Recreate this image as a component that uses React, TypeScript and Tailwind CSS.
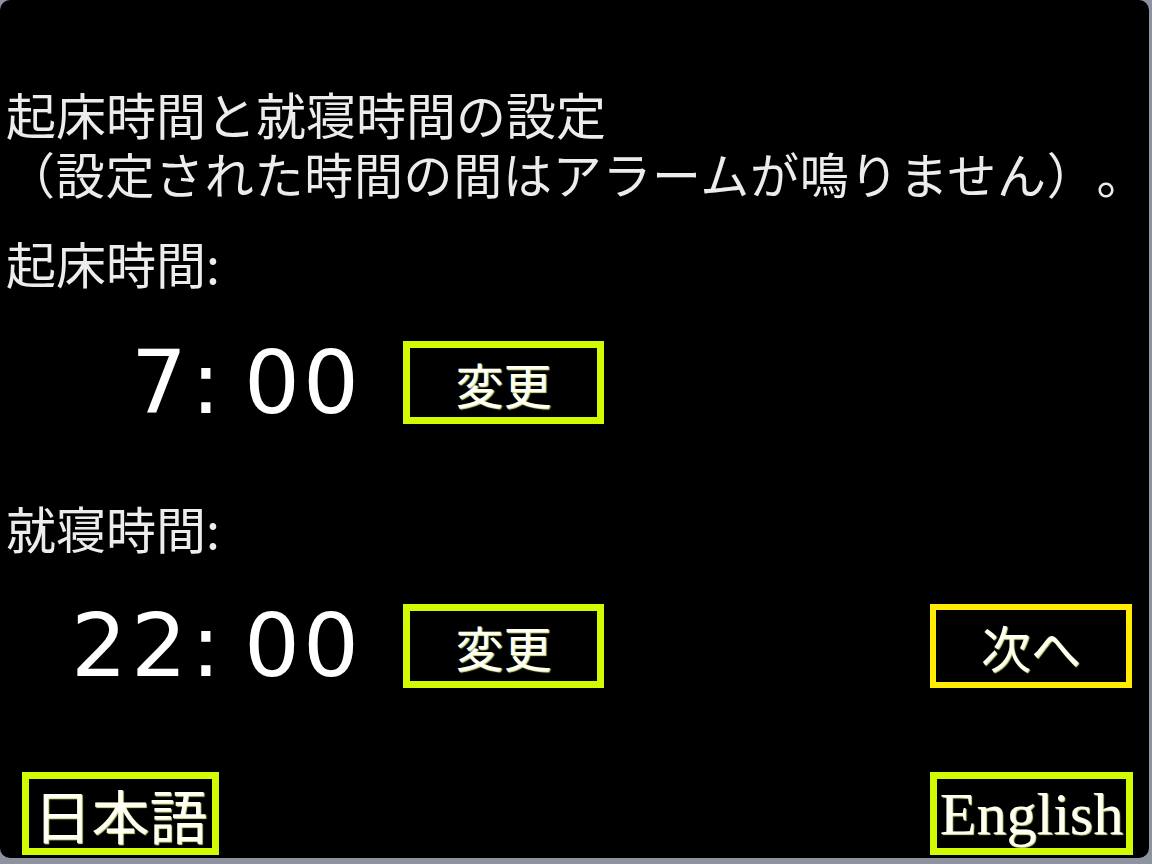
const JP = 'font-["Noto_Sans_CJK_JP","Noto_Sans",sans-serif]';

function TimeRow({ hours, minutes }: { hours: string; minutes: string }) {
  return (
    <div className='flex w-[344px] shrink-0 items-center font-["DejaVu_Sans",sans-serif] text-[88px] leading-none text-white'>
      <span className="w-[185px] shrink-0 text-right tracking-[4px]">{hours}</span>
      <span className="w-[28px] shrink-0 text-center">:</span>
      <span className="ml-[25px] shrink-0 tracking-[3px]">{minutes}</span>
    </div>
  );
}

function Button({
  label,
  className,
  textClass,
}: {
  label: string;
  className: string;
  textClass: string;
}) {
  return (
    <div
      className={`flex shrink-0 items-center justify-center bg-black text-[#fffff4] [text-shadow:1px_1px_1px_#d4e48a] ${className}`}
    >
      <span className={textClass}>{label}</span>
    </div>
  );
}

export default function App() {
  return (
    <div className="h-[864px] w-[1152px] bg-[#8e949f]">
      <div className="h-[858px] w-[1149px] overflow-hidden rounded-[10px] bg-black">
        <div className={`flex flex-col pl-[6px] pt-[84px] text-[#ececec] [text-spacing-trim:space-all] ${JP}`}>
          <p className="text-[50px] leading-[59px]">起床時間と就寝時間の設定</p>
          <p className="whitespace-nowrap text-[49px] leading-[59px] tracking-[0.7px]">
            （設定された時間の間はアラームが鳴りません）。
          </p>
          <p className="mt-[31px] text-[50px] leading-[59px]">起床時間:</p>

          <div className="mt-[49px] flex h-[83px] items-center">
            <TimeRow hours="7" minutes="00" />
            <Button
              label="変更"
              className="ml-[53px] h-[83px] w-[201px] border-[7px] border-[#d2fa00]"
              textClass={`${JP} text-[48px] leading-none`}
            />
          </div>

          <p className="mt-[74px] text-[50px] leading-[59px]">就寝時間:</p>

          <div className="mt-[47px] flex h-[84px] items-center">
            <TimeRow hours="22" minutes="00" />
            <Button
              label="変更"
              className="ml-[53px] h-[84px] w-[201px] border-[7px] border-[#d2fa00]"
              textClass={`${JP} text-[48px] leading-none`}
            />
            <Button
              label="次へ"
              className="ml-[326px] h-[84px] w-[202px] border-[6px] border-[#ffec00]"
              textClass={`${JP} text-[50px] leading-none`}
            />
          </div>

          <div className="mt-[84px] flex h-[83px] items-center">
            <Button
              label="日本語"
              className="ml-[16px] h-[83px] w-[197px] border-[7px] border-[#d2fa00]"
              textClass={`${JP} text-[58px] leading-none`}
            />
            <Button
              label="English"
              className="ml-[711px] h-[83px] w-[203px] border-[7px] border-[#d2fa00]"
              textClass='font-["Liberation_Serif",serif] text-[60px] leading-none'
            />
          </div>
        </div>
      </div>
    </div>
  );
}
